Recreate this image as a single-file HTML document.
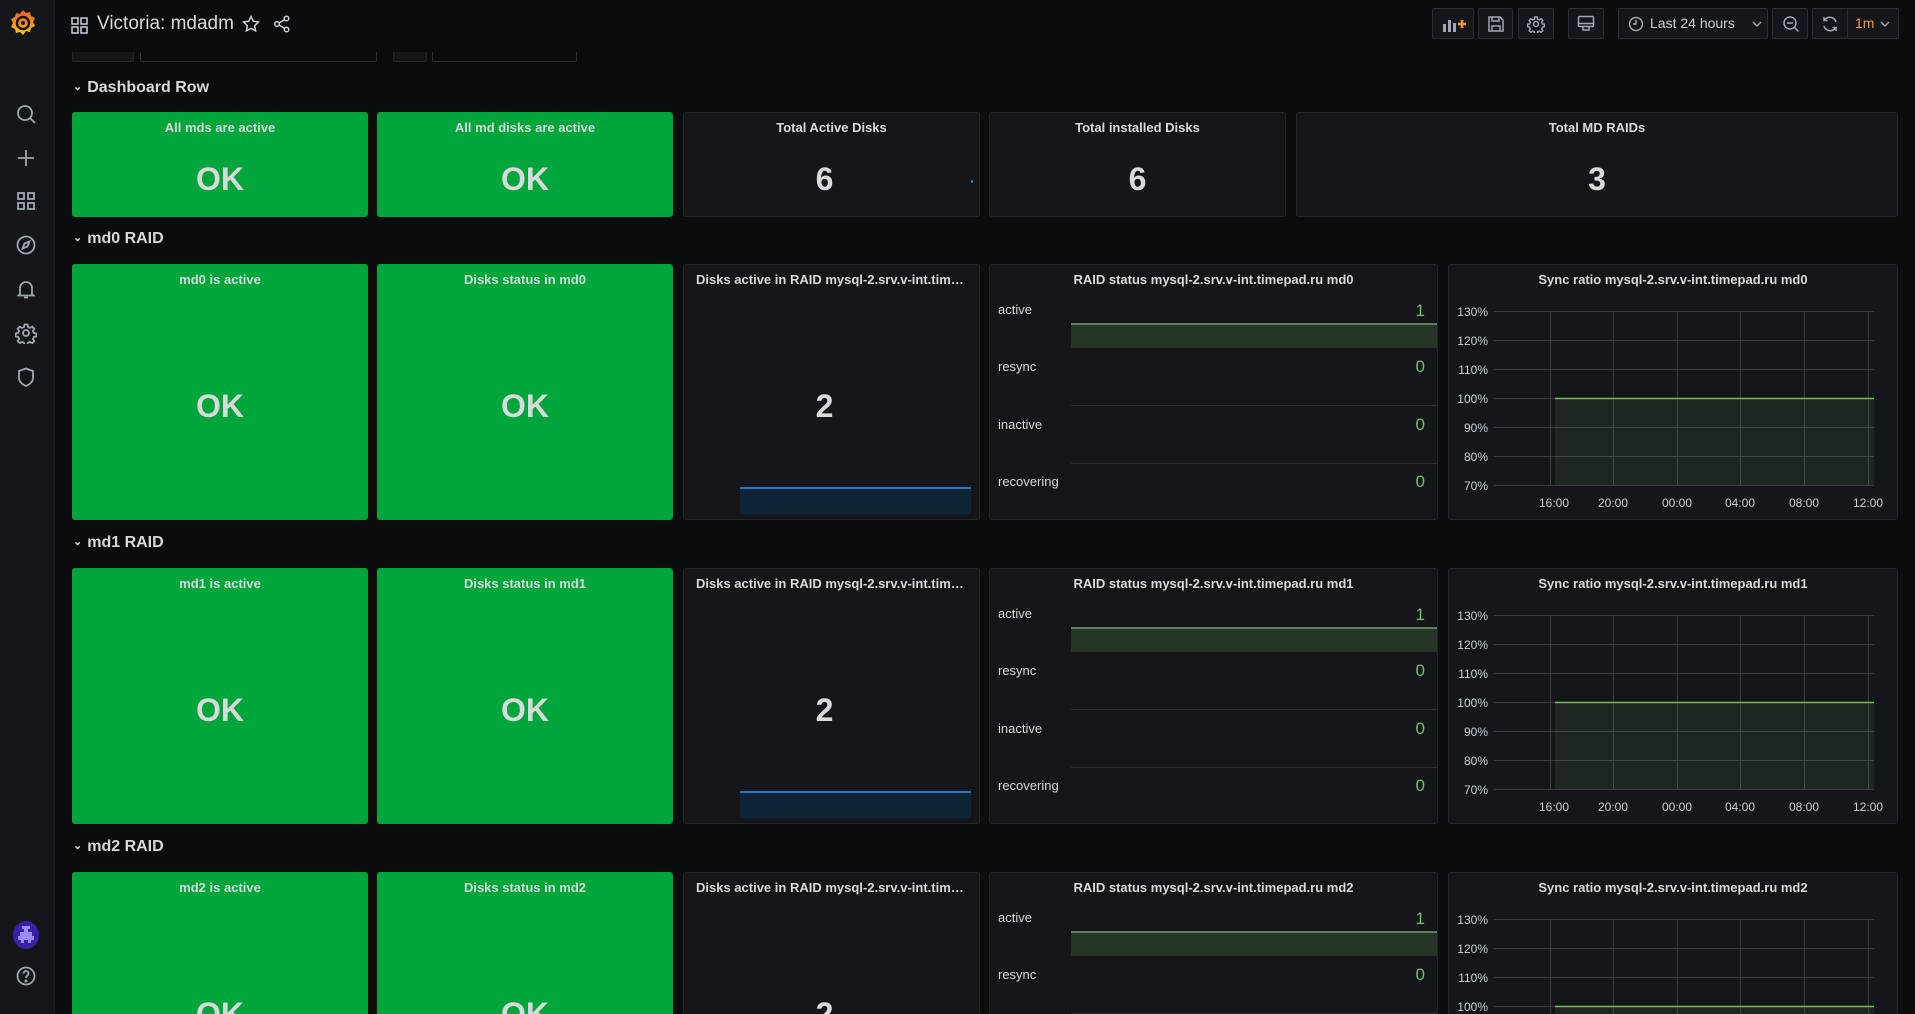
<!DOCTYPE html>
<html><head><meta charset="utf-8"><style>
*{box-sizing:border-box}
html,body{margin:0;width:1915px;height:1014px;overflow:hidden;background:#0b0c0e}
#w{position:relative;width:1915px;height:1014px;overflow:hidden;font-family:"Liberation Sans",sans-serif;color:#d8d9da}
.sb{position:absolute;left:0;top:0;width:55px;height:1014px;background:#141619;border-right:1px solid #1b1d21}
.ic{position:absolute;left:15px;width:22px;height:22px}
.p{position:absolute;background:#141619;border:1px solid #222428;border-radius:3px;overflow:hidden}
.g{background:#00a63b;border-color:#00a63b}
.t{position:absolute;top:6px;left:0;right:0;text-align:center;font-weight:bold;font-size:13px;line-height:18px;padding:0 12px;white-space:nowrap;overflow:hidden;text-overflow:ellipsis;color:#d8d9da}
.v{position:absolute;left:0;right:0;text-align:center;font-weight:bold;font-size:32px;line-height:40px;color:#d8d9da}
.row{position:absolute;left:73px;font-size:16px;font-weight:bold;color:#d8d9da}
.row span{font-size:11px;display:inline-block;margin-right:5px;transform:translateY(-2px)}
.btn{position:absolute;top:8px;height:31px;border:1px solid #2c2e33;border-radius:2px;background:#141619}
.lb{position:absolute;left:8px;font-size:13px;color:#d8d9da}
.nm{position:absolute;right:12px;font-size:17px;color:#73bf69}
.bar{position:absolute;left:81px;right:0;top:58px;height:25px;background:#253527;border-top:2px solid #56854f}
.ln{position:absolute;left:81px;right:0;height:1px;background:#2a2d31}
.sp{position:absolute;left:56px;width:231px;top:222px;height:27px;background:#0f2536;border-top:2px solid #1f78c1}
</style></head><body><div id="w">

<div class="sb">
<svg style="position:absolute;left:9px;top:8px" width="28" height="30" viewBox="0 0 28 30"><defs><linearGradient id="lg" x1="0" y1="1" x2="0" y2="0"><stop offset="0" stop-color="#fbca0a"/><stop offset="1" stop-color="#f05a28"/></linearGradient></defs><path d="M14 2l3 3 4-1 1 4 4 2-2 4 2 4-4 2-1 4-4-1-3 4-3-3-4 1-1-4-4-2 2-4-2-4 4-2 1-4 4 1z" fill="url(#lg)"/><circle cx="14" cy="15" r="6" fill="none" stroke="#141619" stroke-width="2.5"/><circle cx="14" cy="15" r="2" fill="#141619"/></svg>
<svg class="ic" style="top:103px" viewBox="0 0 22 22" fill="none" stroke="#9fa7b3" stroke-width="1.8"><circle cx="10" cy="10" r="7"/><path d="M15 15l5 5"/></svg>
<svg class="ic" style="top:147px" viewBox="0 0 22 22" fill="none" stroke="#9fa7b3" stroke-width="1.8"><path d="M11 3v16M3 11h16"/></svg>
<svg class="ic" style="top:190px" viewBox="0 0 22 22" fill="none" stroke="#9fa7b3" stroke-width="1.8"><rect x="3" y="3" width="6" height="6"/><rect x="13" y="3" width="6" height="6"/><rect x="3" y="13" width="6" height="6"/><rect x="13" y="13" width="6" height="6"/></svg>
<svg class="ic" style="top:234px" viewBox="0 0 22 22" fill="none" stroke="#9fa7b3" stroke-width="1.8"><circle cx="11" cy="11" r="8.5"/><path d="M14.5 7.5l-2 5-5 2 2-5z"/></svg>
<svg class="ic" style="top:278px" viewBox="0 0 22 22" fill="none" stroke="#9fa7b3" stroke-width="1.8"><path d="M5 16V10a6 6 0 0112 0v6l1.5 1.5h-15zM9 19.5h4"/></svg>
<svg class="ic" style="top:322px" viewBox="0 0 22 22" fill="none" stroke="#9fa7b3" stroke-width="1.8"><circle cx="11" cy="11" r="3"/><path d="M9.5 2.5h3l.5 2.5 2 1 2.2-1.4 2.1 2.1-1.4 2.2 1 2 2.5.5v3l-2.5.5-1 2 1.4 2.2-2.1 2.1-2.2-1.4-2 1-.5 2.5h-3l-.5-2.5-2-1-2.2 1.4-2.1-2.1 1.4-2.2-1-2-2.5-.5v-3l2.5-.5 1-2-1.4-2.2 2.1-2.1 2.2 1.4 2-1z"/></svg>
<svg class="ic" style="top:366px" viewBox="0 0 22 22" fill="none" stroke="#9fa7b3" stroke-width="1.8"><path d="M4 5l7-2.5L18 5v7c0 4-3.5 6.5-7 8-3.5-1.5-7-4-7-8z"/></svg>
<svg style="position:absolute;left:13px;top:921px" width="26" height="28" viewBox="0 0 26 28"><ellipse cx="13" cy="14" rx="13" ry="14" fill="#3b1fa8"/><path d="M9 5h8v3h-2v3h4v4h2v4h-3v3h-3v-3h-4v3H8v-3H5v-4h2v-4h4V8H9z" fill="#9c8cf5"/></svg>
<svg class="ic" style="top:965px" viewBox="0 0 22 22" fill="none" stroke="#9fa7b3" stroke-width="1.8"><circle cx="11" cy="11" r="8.5"/><path d="M8.5 8.5a2.5 2.5 0 114 2c-1 .7-1.5 1.2-1.5 2.5"/><circle cx="11" cy="16" r=".6" fill="#9fa7b3"/></svg>
</div>

<div style="position:absolute;left:72px;top:40px;width:62px;height:22px;background:#141619;border:1px solid #222428;border-radius:2px"></div>
<div style="position:absolute;left:140px;top:40px;width:237px;height:22px;border:1px solid #2c2e33;border-radius:2px"></div>
<div style="position:absolute;left:393px;top:40px;width:34px;height:22px;background:#141619;border:1px solid #222428;border-radius:2px"></div>
<div style="position:absolute;left:432px;top:40px;width:145px;height:22px;border:1px solid #2c2e33;border-radius:2px"></div>
<div style="position:absolute;left:56px;top:0;width:1859px;height:52px;background:#0b0c0e"></div>

<svg style="position:absolute;left:71px;top:17px" width="17" height="17" viewBox="0 0 17 17" fill="none" stroke="#c7d0d9" stroke-width="1.5"><rect x="1" y="1" width="6" height="6"/><rect x="10" y="1" width="6" height="6"/><rect x="1" y="10" width="6" height="6"/><rect x="10" y="10" width="6" height="6"/></svg>
<div style="position:absolute;left:97px;top:13px;font-size:19px;color:#d8d9da">Victoria: mdadm</div>
<svg style="position:absolute;left:242px;top:15px" width="18" height="18" viewBox="0 0 18 18" fill="none" stroke="#c7d0d9" stroke-width="1.5"><path d="M9 1.5l2.3 4.8 5.2.7-3.8 3.6.9 5.2L9 13.3 4.4 15.8l.9-5.2L1.5 7l5.2-.7z"/></svg>
<svg style="position:absolute;left:273px;top:15px" width="18" height="18" viewBox="0 0 18 18" fill="none" stroke="#c7d0d9" stroke-width="1.5"><circle cx="13.5" cy="3.5" r="2.3"/><circle cx="4" cy="9" r="2.3"/><circle cx="13.5" cy="14.5" r="2.3"/><path d="M6 8l5.5-3.3M6 10l5.5 3.3"/></svg>

<div class="btn" style="left:1432px;width:42px"><svg style="position:absolute;left:9px;top:7px" width="24" height="16" viewBox="0 0 24 16"><path d="M1 8h3v8H1zM6 4h3v12H6zM11 7h3v9h-3z" fill="#9fa7b3"/><path d="M16 8h8M20 4v8" stroke="#ff9830" stroke-width="2.6"/></svg></div>
<div class="btn" style="left:1478px;width:35px"><svg style="position:absolute;left:8px;top:6px" width="18" height="18" viewBox="0 0 18 18" fill="none" stroke="#9fa7b3" stroke-width="1.5"><path d="M2 2h11l3 3v11H2z"/><path d="M5 2v4h7V2M5 16v-5h8v5"/></svg></div>
<div class="btn" style="left:1518px;width:36px"><svg style="position:absolute;left:8px;top:6px" width="18" height="18" viewBox="0 0 22 22" fill="none" stroke="#9fa7b3" stroke-width="1.8"><circle cx="11" cy="11" r="3"/><path d="M9.5 2.5h3l.5 2.5 2 1 2.2-1.4 2.1 2.1-1.4 2.2 1 2 2.5.5v3l-2.5.5-1 2 1.4 2.2-2.1 2.1-2.2-1.4-2 1-.5 2.5h-3l-.5-2.5-2-1-2.2 1.4-2.1-2.1 1.4-2.2-1-2-2.5-.5v-3l2.5-.5 1-2-1.4-2.2 2.1-2.1 2.2 1.4 2-1z"/></svg></div>
<div class="btn" style="left:1568px;width:36px"><svg style="position:absolute;left:8px;top:6px" width="18" height="18" viewBox="0 0 18 18" fill="none" stroke="#9fa7b3" stroke-width="1.5"><rect x="1.5" y="1.5" width="15" height="10" rx="1"/><path d="M1.5 8.5h15M6 12v3h6v-3"/></svg></div>
<div class="btn" style="left:1618px;width:150px"><svg style="position:absolute;left:9px;top:7px" width="16" height="16" viewBox="0 0 16 16" fill="none" stroke="#9fa7b3" stroke-width="1.5"><circle cx="8" cy="8" r="6.5"/><path d="M8 4v4H5"/></svg><span style="position:absolute;left:31px;top:6px;font-size:14px;color:#c7d0d9">Last 24 hours</span><svg style="position:absolute;left:133px;top:11px" width="10" height="8" viewBox="0 0 10 8" fill="none" stroke="#9fa7b3" stroke-width="1.5"><path d="M1 2l4 4 4-4"/></svg></div>
<div class="btn" style="left:1772px;width:36px"><svg style="position:absolute;left:9px;top:6px" width="18" height="18" viewBox="0 0 18 18" fill="none" stroke="#9fa7b3" stroke-width="1.5"><circle cx="8" cy="8" r="6"/><path d="M12.5 12.5l4 4M5 8h6"/></svg></div>
<div class="btn" style="left:1812px;width:87px"><div style="position:absolute;left:34px;top:0;width:1px;height:29px;background:#2c2e33"></div><svg style="position:absolute;left:8px;top:6px" width="18" height="18" viewBox="0 0 18 18" fill="none" stroke="#9fa7b3" stroke-width="1.5"><path d="M15 7A6.5 6.5 0 003.5 5M3 11a6.5 6.5 0 0011.5 2M3 2v3.5h3.5M15 16v-3.5h-3.5"/></svg><span style="position:absolute;left:42px;top:6px;font-size:14px;color:#ff9830">1m</span><svg style="position:absolute;left:67px;top:11px" width="10" height="8" viewBox="0 0 10 8" fill="none" stroke="#9fa7b3" stroke-width="1.5"><path d="M1 2l4 4 4-4"/></svg></div>

<div class="row" style="top:79px"><span>⌄</span>Dashboard Row</div>
<div class="p g" style="left:72px;top:112px;width:296px;height:105px"><div class="t">All mds are active</div><div class="v" style="top:46px">OK</div></div>
<div class="p g" style="left:377px;top:112px;width:296px;height:105px"><div class="t">All md disks are active</div><div class="v" style="top:46px">OK</div></div>
<div class="p" style="left:683px;top:112px;width:297px;height:105px"><div class="t">Total Active Disks</div><div class="v" style="top:46px;right:14px">6</div><div style="position:absolute;left:287px;top:67px;width:2px;height:3px;background:#1f78c1"></div></div>
<div class="p" style="left:989px;top:112px;width:297px;height:105px"><div class="t">Total installed Disks</div><div class="v" style="top:46px">6</div></div>
<div class="p" style="left:1296px;top:112px;width:602px;height:105px"><div class="t">Total MD RAIDs</div><div class="v" style="top:46px">3</div></div>

<div class="row" style="top:230px"><span>⌄</span>md0 RAID</div>
<div class="row" style="top:534px"><span>⌄</span>md1 RAID</div>
<div class="row" style="top:838px"><span>⌄</span>md2 RAID</div>

<div class="p g" style="left:72px;top:264px;width:296px;height:256px"><div class="t">md0 is active</div><div class="v" style="top:121px">OK</div></div>
<div class="p g" style="left:377px;top:264px;width:296px;height:256px"><div class="t">Disks status in md0</div><div class="v" style="top:121px">OK</div></div>
<div class="p" style="left:683px;top:264px;width:297px;height:256px"><div class="t">Disks active in RAID mysql-2.srv.v-int.timepad.ru md0</div><div class="v" style="top:121px;right:14px">2</div><div class="sp"></div></div>
<div class="p" style="left:989px;top:264px;width:449px;height:256px"><div class="t">RAID status mysql-2.srv.v-int.timepad.ru md0</div>
<div class="lb" style="top:37px">active</div><div class="nm" style="top:36px">1</div><div class="bar"></div>
<div class="lb" style="top:94px">resync</div><div class="nm" style="top:92px">0</div><div class="ln" style="top:140px"></div>
<div class="lb" style="top:152px">inactive</div><div class="nm" style="top:150px">0</div><div class="ln" style="top:198px"></div>
<div class="lb" style="top:209px">recovering</div><div class="nm" style="top:207px">0</div><div class="ln" style="top:254px"></div></div>
<div class="p" style="left:1448px;top:264px;width:450px;height:256px"><div class="t">Sync ratio mysql-2.srv.v-int.timepad.ru md0</div>
<svg style="position:absolute;left:0;top:0" width="450" height="256" font-family="Liberation Sans" font-size="12" fill="#c7d0d9">
<g stroke="#3a3d42" stroke-width="1"><path d="M45 46.5H425M45 75.5H425M45 104.5H425M45 133.5H425M45 162.5H425M45 191.5H425M45 220.5H425M101.5 46V220M164.5 46V220M228.5 46V220M291.5 46V220M355.5 46V220M419.5 46V220"/></g>
<rect x="106" y="133" width="319" height="87" fill="#73bf69" fill-opacity="0.1"/><path d="M106 133.5H425" stroke="#73bf69" stroke-width="1.5"/>
<g text-anchor="end"><text x="39" y="51">130%</text><text x="39" y="80">120%</text><text x="39" y="109">110%</text><text x="39" y="138">100%</text><text x="39" y="167">90%</text><text x="39" y="196">80%</text><text x="39" y="225">70%</text></g>
<g text-anchor="middle"><text x="105" y="242">16:00</text><text x="164" y="242">20:00</text><text x="228" y="242">00:00</text><text x="291" y="242">04:00</text><text x="355" y="242">08:00</text><text x="419" y="242">12:00</text></g></svg></div>

<div class="p g" style="left:72px;top:568px;width:296px;height:256px"><div class="t">md1 is active</div><div class="v" style="top:121px">OK</div></div>
<div class="p g" style="left:377px;top:568px;width:296px;height:256px"><div class="t">Disks status in md1</div><div class="v" style="top:121px">OK</div></div>
<div class="p" style="left:683px;top:568px;width:297px;height:256px"><div class="t">Disks active in RAID mysql-2.srv.v-int.timepad.ru md1</div><div class="v" style="top:121px;right:14px">2</div><div class="sp"></div></div>
<div class="p" style="left:989px;top:568px;width:449px;height:256px"><div class="t">RAID status mysql-2.srv.v-int.timepad.ru md1</div>
<div class="lb" style="top:37px">active</div><div class="nm" style="top:36px">1</div><div class="bar"></div>
<div class="lb" style="top:94px">resync</div><div class="nm" style="top:92px">0</div><div class="ln" style="top:140px"></div>
<div class="lb" style="top:152px">inactive</div><div class="nm" style="top:150px">0</div><div class="ln" style="top:198px"></div>
<div class="lb" style="top:209px">recovering</div><div class="nm" style="top:207px">0</div><div class="ln" style="top:254px"></div></div>
<div class="p" style="left:1448px;top:568px;width:450px;height:256px"><div class="t">Sync ratio mysql-2.srv.v-int.timepad.ru md1</div>
<svg style="position:absolute;left:0;top:0" width="450" height="256" font-family="Liberation Sans" font-size="12" fill="#c7d0d9">
<g stroke="#3a3d42" stroke-width="1"><path d="M45 46.5H425M45 75.5H425M45 104.5H425M45 133.5H425M45 162.5H425M45 191.5H425M45 220.5H425M101.5 46V220M164.5 46V220M228.5 46V220M291.5 46V220M355.5 46V220M419.5 46V220"/></g>
<rect x="106" y="133" width="319" height="87" fill="#73bf69" fill-opacity="0.1"/><path d="M106 133.5H425" stroke="#73bf69" stroke-width="1.5"/>
<g text-anchor="end"><text x="39" y="51">130%</text><text x="39" y="80">120%</text><text x="39" y="109">110%</text><text x="39" y="138">100%</text><text x="39" y="167">90%</text><text x="39" y="196">80%</text><text x="39" y="225">70%</text></g>
<g text-anchor="middle"><text x="105" y="242">16:00</text><text x="164" y="242">20:00</text><text x="228" y="242">00:00</text><text x="291" y="242">04:00</text><text x="355" y="242">08:00</text><text x="419" y="242">12:00</text></g></svg></div>

<div class="p g" style="left:72px;top:872px;width:296px;height:256px"><div class="t">md2 is active</div><div class="v" style="top:121px">OK</div></div>
<div class="p g" style="left:377px;top:872px;width:296px;height:256px"><div class="t">Disks status in md2</div><div class="v" style="top:121px">OK</div></div>
<div class="p" style="left:683px;top:872px;width:297px;height:256px"><div class="t">Disks active in RAID mysql-2.srv.v-int.timepad.ru md2</div><div class="v" style="top:121px;right:14px">2</div></div>
<div class="p" style="left:989px;top:872px;width:449px;height:256px"><div class="t">RAID status mysql-2.srv.v-int.timepad.ru md2</div>
<div class="lb" style="top:37px">active</div><div class="nm" style="top:36px">1</div><div class="bar"></div>
<div class="lb" style="top:94px">resync</div><div class="nm" style="top:92px">0</div><div class="ln" style="top:140px"></div></div>
<div class="p" style="left:1448px;top:872px;width:450px;height:256px"><div class="t">Sync ratio mysql-2.srv.v-int.timepad.ru md2</div>
<svg style="position:absolute;left:0;top:0" width="450" height="256" font-family="Liberation Sans" font-size="12" fill="#c7d0d9">
<g stroke="#3a3d42" stroke-width="1"><path d="M45 46.5H425M45 75.5H425M45 104.5H425M45 133.5H425M45 162.5H425M45 191.5H425M45 220.5H425M101.5 46V220M164.5 46V220M228.5 46V220M291.5 46V220M355.5 46V220M419.5 46V220"/></g>
<rect x="106" y="133" width="319" height="87" fill="#73bf69" fill-opacity="0.1"/><path d="M106 133.5H425" stroke="#73bf69" stroke-width="1.5"/>
<g text-anchor="end"><text x="39" y="51">130%</text><text x="39" y="80">120%</text><text x="39" y="109">110%</text><text x="39" y="138">100%</text><text x="39" y="167">90%</text><text x="39" y="196">80%</text><text x="39" y="225">70%</text></g></svg></div>

</div></body></html>
